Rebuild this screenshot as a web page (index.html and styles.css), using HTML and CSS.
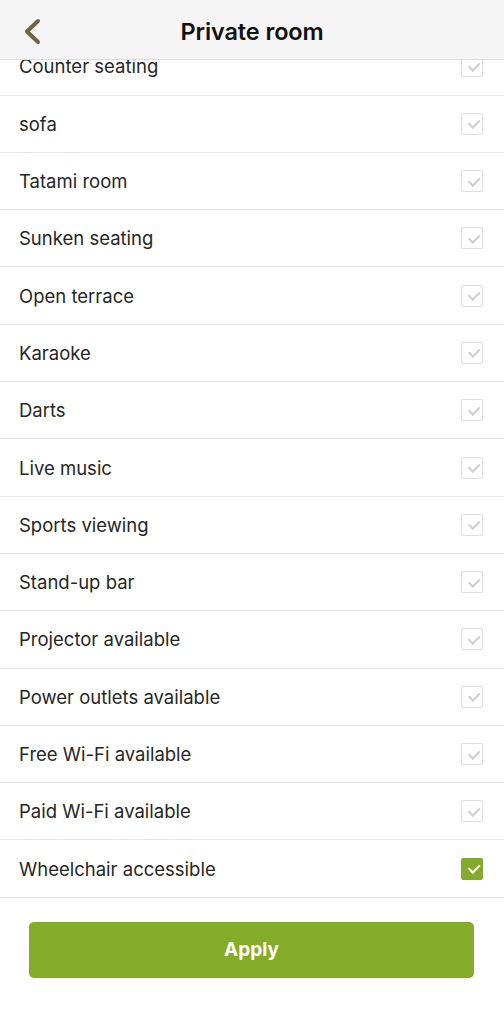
FILE: index.html
```html
<!DOCTYPE html>
<html lang="en">
<head>
<meta charset="utf-8">
<title>Private room</title>
<link rel="stylesheet" href="styles.css">
</head>
<body>
<header class="nav">
  <button class="back" aria-label="Back">
    <svg width="20" height="28" viewBox="0 0 20 28"><polyline points="15,4 4,14.5 15,25" fill="none" stroke="#6e6446" stroke-width="4" stroke-linecap="round" stroke-linejoin="round"/></svg>
  </button>
  <h1 class="title">Private room</h1>
</header>
<main class="page">
  <ul class="options">
    <li class="option"><span>Counter seating</span><span class="box"></span></li>
    <li class="option"><span>sofa</span><span class="box"></span></li>
    <li class="option"><span>Tatami room</span><span class="box"></span></li>
    <li class="option"><span>Sunken seating</span><span class="box"></span></li>
    <li class="option"><span>Open terrace</span><span class="box"></span></li>
    <li class="option"><span>Karaoke</span><span class="box"></span></li>
    <li class="option"><span>Darts</span><span class="box"></span></li>
    <li class="option"><span>Live music</span><span class="box"></span></li>
    <li class="option"><span>Sports viewing</span><span class="box"></span></li>
    <li class="option"><span>Stand-up bar</span><span class="box"></span></li>
    <li class="option"><span>Projector available</span><span class="box"></span></li>
    <li class="option"><span>Power outlets available</span><span class="box"></span></li>
    <li class="option"><span>Free Wi-Fi available</span><span class="box"></span></li>
    <li class="option"><span>Paid Wi-Fi available</span><span class="box"></span></li>
    <li class="option"><span>Wheelchair accessible</span><span class="box checked"></span></li>
  </ul>
  <div class="actions">
    <button class="apply">Apply</button>
  </div>
</main>
</body>
</html>
```
FILE: styles.css
```css
html, body {
  margin: 0;
  padding: 0;
  background: #ffffff;
}
body {
  font-family: Inter, "Liberation Sans", Arial, sans-serif;
  color: #242424;
  width: 504px;
  height: 1024px;
  overflow: hidden;
}
.nav {
  position: fixed;
  top: 0;
  left: 0;
  right: 0;
  height: 59px;
  background: #f5f5f5;
  border-bottom: 1px solid #dcdcdc;
  display: flex;
  align-items: center;
  justify-content: center;
  z-index: 2;
}
.back {
  position: absolute;
  left: 23px;
  top: 17px;
  width: 22px;
  height: 28px;
  padding: 0;
  border: 0;
  background: none;
  display: flex;
}
.title {
  margin: 0;
  font-size: 23.5px;
  font-weight: 600;
  color: #111;
  letter-spacing: -0.1px;
  padding-top: 3px;
}
.page {
  padding-top: 38.3px;
}
.options {
  list-style: none;
  margin: 0;
  padding: 0;
}
.option {
  box-sizing: border-box;
  height: 57.3px;
  border-bottom: 1px solid #e6e6e6;
  display: flex;
  align-items: center;
  justify-content: space-between;
  padding: 0 21px 0 19px;
  font-size: 18.5px;
  color: #262626;
}
.box {
  box-sizing: border-box;
  width: 22px;
  height: 22px;
  border: 1.5px solid #dedede;
  border-radius: 2px;
  position: relative;
}
.box::after {
  content: "";
  position: absolute;
  left: 5.5px;
  top: 3.5px;
  width: 9px;
  height: 5px;
  border-left: 2px solid #cfcfcf;
  border-bottom: 2px solid #cfcfcf;
  transform: rotate(-45deg) translate(-1px, 2px);
}
.box.checked {
  background: #84ac2a;
  border-color: #84ac2a;
}
.box.checked::after {
  border-color: #ffffff;
  border-width: 2.5px;
}
.actions {
  padding: 24px 30px 0 29px;
}
.apply {
  display: block;
  width: 100%;
  height: 56px;
  border: 0;
  border-radius: 5px;
  background: #84ac28;
  color: #ffffff;
  font-family: Inter, "Liberation Sans", Arial, sans-serif;
  font-size: 19px;
  font-weight: 700;
}
```
